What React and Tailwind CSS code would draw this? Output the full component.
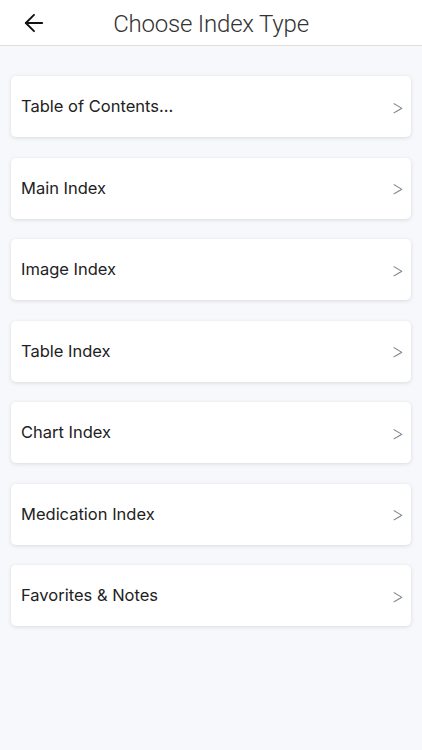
import { ArrowLeft } from 'lucide-react';

const items = [
  'Table of Contents...',
  'Main Index',
  'Image Index',
  'Table Index',
  'Chart Index',
  'Medication Index',
  'Favorites & Notes',
];

export default function App() {
  return (
    <div className="w-[422px] h-[750px] bg-[#f7f8fb] flex flex-col" style={{ fontFamily: 'Inter, "Liberation Sans", Arial, sans-serif' }}>
      {/* Header */}
      <div className="h-[46px] bg-white border-b border-[#dedede] flex items-center relative shrink-0">
        <button className="absolute left-[20px] top-[9px] text-[#111]">
          <ArrowLeft size={28} strokeWidth={1.6} />
        </button>
        <h1
          className="w-full text-center text-[24px] font-light text-[#333] tracking-[-0.2px] pt-[3px]"
          style={{ fontFamily: 'Roboto, "Liberation Sans", sans-serif' }}
        >
          Choose Index Type
        </h1>
      </div>

      {/* List */}
      <div className="flex flex-col gap-[20.5px] px-[11px] pt-[30px]">
        {items.map((label) => (
          <div
            key={label}
            className="h-[61px] bg-white rounded-[5px] shadow-[0_1px_4px_rgba(0,0,0,0.12)] flex items-center justify-between pl-[10px] pr-[7px]"
          >
            <span className="text-[16.5px] text-[#222]">{label}</span>
            <span className="text-[20px] text-[#777] font-extralight">&gt;</span>
          </div>
        ))}
      </div>
    </div>
  );
}
